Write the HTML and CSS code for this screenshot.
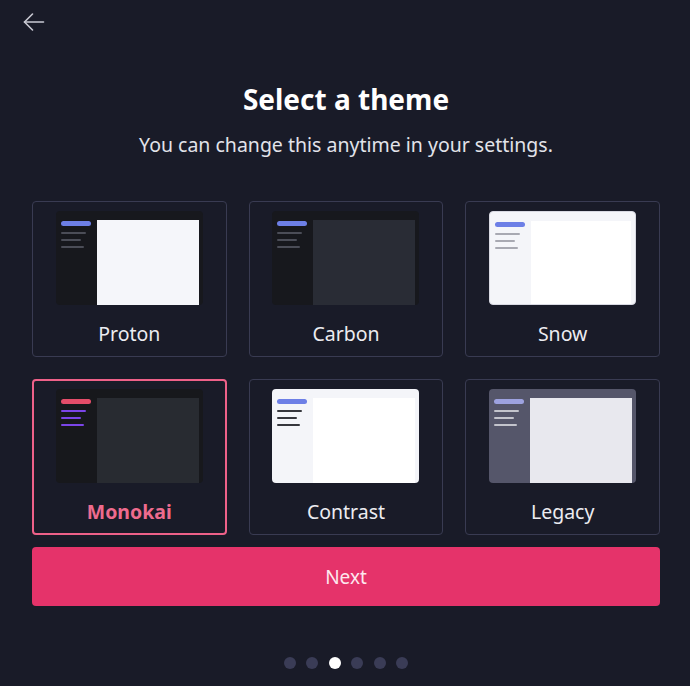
FILE: index.html
```html
<!DOCTYPE html>
<html lang="en">
<head>
    <meta charset="UTF-8">
    <meta name="viewport" content="width=device-width, initial-scale=1.0">
    <title>Select a theme</title>
    <link rel="stylesheet" href="styles.css">
</head>
<body>
    <div class="modal">
        <button class="back" aria-label="Back">
            <svg width="22" height="18" viewBox="0 0 22 18" fill="none" stroke="currentColor" stroke-width="1.6" stroke-linecap="round" stroke-linejoin="round">
                <path d="M20.5 9H1.5"/>
                <path d="M9.5 1L1.5 9l8 8"/>
            </svg>
        </button>

        <h1 class="title">Select a theme</h1>
        <p class="subtitle">You can change this anytime in your settings.</p>

        <div class="themes">
            <div class="theme proton">
                <div class="preview">
                    <div class="side"><i class="accent"></i><i></i><i></i><i></i></div>
                    <div class="main"></div>
                </div>
                <span class="name">Proton</span>
            </div>
            <div class="theme carbon">
                <div class="preview">
                    <div class="side"><i class="accent"></i><i></i><i></i><i></i></div>
                    <div class="main"></div>
                </div>
                <span class="name">Carbon</span>
            </div>
            <div class="theme snow">
                <div class="preview">
                    <div class="side"><i class="accent"></i><i></i><i></i><i></i></div>
                    <div class="main"></div>
                </div>
                <span class="name">Snow</span>
            </div>
            <div class="theme monokai selected">
                <div class="preview">
                    <div class="side"><i class="accent"></i><i></i><i></i><i></i></div>
                    <div class="main"></div>
                </div>
                <span class="name">Monokai</span>
            </div>
            <div class="theme contrast">
                <div class="preview">
                    <div class="side"><i class="accent"></i><i></i><i></i><i></i></div>
                    <div class="main"></div>
                </div>
                <span class="name">Contrast</span>
            </div>
            <div class="theme legacy">
                <div class="preview">
                    <div class="side"><i class="accent"></i><i></i><i></i><i></i></div>
                    <div class="main"></div>
                </div>
                <span class="name">Legacy</span>
            </div>
        </div>

        <button class="next">Next</button>

        <div class="dots">
            <span></span>
            <span></span>
            <span class="active"></span>
            <span></span>
            <span></span>
            <span></span>
        </div>
    </div>
</body>
</html>
```

FILE: styles.css
```css
* {
    margin: 0;
    padding: 0;
    box-sizing: border-box;
}

body {
    background-color: #191b28;
    color: #f2f2f5;
    font-family: "Noto Sans", Inter, sans-serif;
}

.modal {
    width: 690px;
    height: 686px;
    padding: 0 30px 0 32px;
    display: flex;
    flex-direction: column;
    align-items: center;
    position: relative;
}

.back {
    position: absolute;
    left: 23px;
    top: 13px;
    background: none;
    border: none;
    color: #c9cad4;
    display: flex;
}

.title {
    margin-top: 82px;
    font-size: 28px;
    line-height: 34px;
    font-weight: 700;
    color: #fff;
}

.subtitle {
    margin-top: 17px;
    font-size: 19.5px;
    line-height: 24px;
    color: #e2e3ea;
}

.themes {
    margin-top: 44px;
    width: 100%;
    display: grid;
    grid-template-columns: repeat(3, 1fr);
    gap: 22px;
}

.theme {
    height: 156px;
    border: 1px solid #393b52;
    border-radius: 4px;
    display: flex;
    flex-direction: column;
    align-items: center;
    padding-top: 9px;
}

.theme.selected {
    border: 2px solid #ee6189;
    padding-top: 8px;
}

.preview {
    width: 147px;
    height: 94px;
    border-radius: 4px;
    overflow: hidden;
    display: flex;
    padding: 9px 4px 0 0;
}

.preview .side {
    width: 41px;
    display: flex;
    flex-direction: column;
    align-items: flex-start;
    padding: 1px 0 0 5px;
    gap: 5px;
}

.preview .side i {
    display: block;
    height: 2px;
    width: 25px;
    border-radius: 1px;
}

.preview .side i.accent {
    width: 30px;
    height: 5px;
    border-radius: 3px;
    margin-bottom: 1px;
}

.preview .side i:nth-child(3) {
    width: 20px;
}

.preview .side i:nth-child(4) {
    width: 23px;
}

.preview .main {
    flex: 1;
}

.name {
    margin-top: 15px;
    font-size: 19.5px;
    line-height: 28px;
    color: #ececf1;
}

.theme.selected .name {
    font-weight: 700;
    color: #ee6b8e;
}

/* previews */
.proton .preview { background-color: #17181d; }
.proton .main { background-color: #f5f6fa; }
.proton .side i { background-color: #4b4d57; }
.proton .side i.accent { background-color: #6d7fe6; }

.carbon .preview { background-color: #17181d; }
.carbon .main { background-color: #292c35; }
.carbon .side i { background-color: #4b4d57; }
.carbon .side i.accent { background-color: #6d7fe6; }

.snow .preview { background-color: #f4f5f9; border: 1px solid #d8d9e2; }
.snow .main { background-color: #fff; }
.snow .side i { background-color: #a8a9b2; }
.snow .side i.accent { background-color: #6d7fe6; }

.monokai .preview { background-color: #17181c; }
.monokai .main { background-color: #282b31; }
.monokai .side i { background-color: #7b45e8; }
.monokai .side i.accent { background-color: #e44d69; }

.contrast .preview { background-color: #f4f5f9; }
.contrast .main { background-color: #fff; }
.contrast .side i { background-color: #36373d; }
.contrast .side i.accent { background-color: #6d7fe6; }

.legacy .preview { background-color: #55566a; }
.legacy .main { background-color: #e8e8ee; }
.legacy .side i { background-color: #c3c4cc; }
.legacy .side i.accent { background-color: #9da2df; }

.next {
    margin-top: 12px;
    width: 100%;
    height: 59px;
    border: none;
    border-radius: 4px;
    background-color: #e5336a;
    color: #fde8ee;
    font-family: inherit;
    font-size: 19px;
}

.dots {
    margin-top: 51px;
    display: flex;
    gap: 10.5px;
}

.dots span {
    width: 12px;
    height: 12px;
    border-radius: 50%;
    background-color: #3a3c56;
}

.dots span.active {
    background-color: #fff;
}
```
